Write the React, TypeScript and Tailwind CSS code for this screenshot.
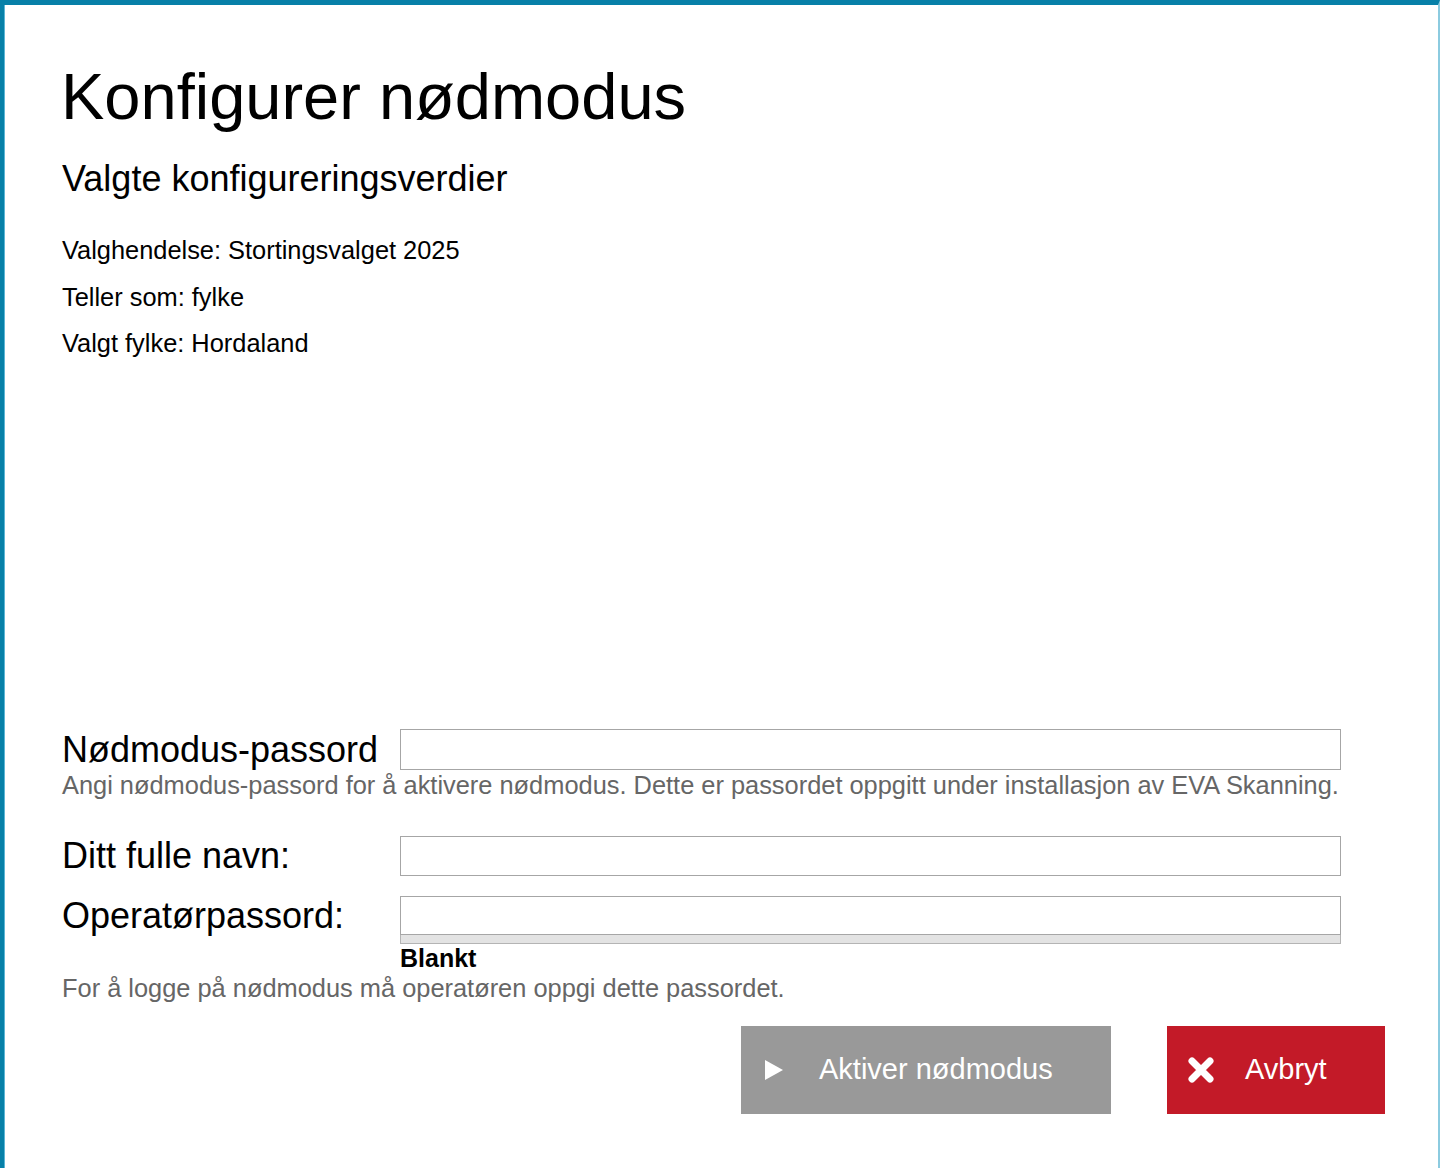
export default function App() {
  return (
    <div
      className="min-h-[1168px] bg-white border-t-[5px] border-l-4 border-r-2 border-[#0780a8] border-r-[#8ccbe0] shadow-[inset_1px_0_0_#5cb6d6] text-black"
      style={{ fontFamily: '"Liberation Sans", Arial, sans-serif' }}
    >
      <div className="pl-[58px] pr-[53px] pt-[59px]">
        <h1 className="-ml-[1px] text-[65px] leading-[65px] font-normal">Konfigurer nødmodus</h1>
        <h2 className="mt-[32px] text-[36px] leading-[36px] font-normal">Valgte konfigureringsverdier</h2>

        <div className="mt-[30px] text-[25.4px] leading-[46.5px]">
          <p>Valghendelse: Stortingsvalget 2025</p>
          <p>Teller som: fylke</p>
          <p>Valgt fylke: Hordaland</p>
        </div>

        <div className="mt-[362px]">
          <div className="flex">
            <label className="w-[338px] text-[36px] leading-[41px]">Nødmodus-passord</label>
            <input type="password" className="w-[941px] h-[41px] border border-[#a6a6a6] bg-white outline-none" />
          </div>
          <p className="text-[25.4px] leading-[30px] text-[#666666]">
            Angi nødmodus-passord for å aktivere nødmodus. Dette er passordet oppgitt under installasjon av EVA Skanning.
          </p>

          <div className="mt-[36px] flex">
            <label className="w-[338px] text-[36px] leading-[40px]">Ditt fulle navn:</label>
            <input type="text" className="w-[941px] h-[40px] border border-[#a6a6a6] bg-white outline-none" />
          </div>

          <div className="mt-[20px] flex">
            <label className="w-[338px] text-[36px] leading-[39px]">Operatørpassord:</label>
            <div className="w-[941px]">
              <input type="password" className="block w-full h-[39px] border border-[#a6a6a6] bg-white outline-none" />
              <div className="h-[9px] bg-[#e3e3e3] border-x border-b border-[#b4b4b4]" />
              <div className="text-[25px] leading-[28px] font-bold">Blankt</div>
            </div>
          </div>
          <p className="mt-[2px] text-[25.4px] leading-[28px] text-[#666666]">
            For å logge på nødmodus må operatøren oppgi dette passordet.
          </p>

          <div className="mt-[24px] flex justify-end gap-[56px]">
            <button className="w-[370px] h-[88px] bg-[#999999] text-white flex items-center pl-[24px] text-[29px]">
              <svg width="18" height="20" viewBox="0 0 18 20" className="shrink-0">
                <polygon points="0,0 18,10 0,20" fill="white" />
              </svg>
              <span className="ml-[36px]">Aktiver nødmodus</span>
            </button>
            <button className="w-[218px] h-[88px] bg-[#c31a28] text-white flex items-center pl-[20px] text-[29px]">
              <svg width="28" height="28" viewBox="0 0 28 28" className="shrink-0">
                <path d="M5 5 L23 23 M23 5 L5 23" stroke="white" strokeWidth="7" strokeLinecap="round" />
              </svg>
              <span className="ml-[30px]">Avbryt</span>
            </button>
          </div>
        </div>
      </div>
    </div>
  )
}
